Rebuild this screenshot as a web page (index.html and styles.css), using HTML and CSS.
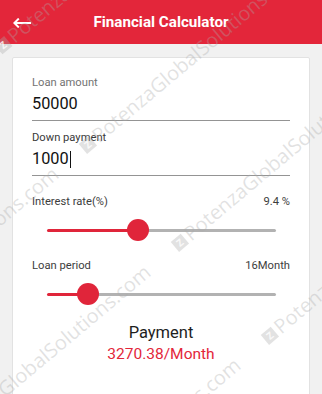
FILE: index.html
```html
<!DOCTYPE html>
<html>
<head>
<meta charset="utf-8">
<link rel="stylesheet" href="styles.css">
</head>
<body>
<div class="screen">
  <header class="appbar">
    <div class="back">
      <svg width="18" height="10" viewBox="0 0 18 10"><path d="M1 5H18M5.8 0.6L1.4 5L5.8 9.4" fill="none" stroke="#fff" stroke-width="2"/></svg>
    </div>
    <h1 class="title">Financial Calculator</h1>
    <div class="spacer"></div>
  </header>

  <main class="card">
    <div class="field">
      <div class="field-label">Loan amount</div>
      <div class="field-value">50000</div>
    </div>
    <div class="field field-focus">
      <div class="field-label">Down payment</div>
      <div class="field-value">1000<span class="caret"></span></div>
    </div>

    <div class="row row-first">
      <span>Interest rate(%)</span>
      <span>9.4 %</span>
    </div>
    <div class="slider">
      <div class="track">
        <div class="fill" style="width:39.7%"></div>
        <div class="rest"></div>
      </div>
      <div class="thumb" style="left:39.7%"></div>
    </div>

    <div class="row">
      <span>Loan period</span>
      <span>16Month</span>
    </div>
    <div class="slider">
      <div class="track">
        <div class="fill" style="width:17.9%"></div>
        <div class="rest"></div>
      </div>
      <div class="thumb" style="left:17.9%"></div>
    </div>

    <div class="result">
      <div class="result-title">Payment</div>
      <div class="result-value">3270.38/Month</div>
    </div>
  </main>

  <div class="watermarks" aria-hidden="true">
    <div class="wm wm-a"><span class="rep"><i class="logo">Z</i>PotenzaGlobalSolutions.com</span></div>
    <div class="wm wm-b"><span class="rep"><i class="logo">Z</i>PotenzaGlobalSolutions.com</span><span class="rep"><i class="logo">Z</i>PotenzaGlobalSolutions.com</span></div>
    <div class="wm wm-c"><span class="rep"><i class="logo">Z</i>PotenzaGlobalSolutions.com</span><span class="rep"><i class="logo">Z</i>PotenzaGlobalSolutions.com</span></div>
    <div class="wm wm-d"><span class="rep"><i class="logo">Z</i>PotenzaGlobalSolutions.com</span><span class="rep"><i class="logo">Z</i>PotenzaGlobalSolutions.com</span></div>
  </div>
</div>
</body>
</html>
```

FILE: styles.css
```css
* { box-sizing: border-box; }
html, body {
  margin: 0;
  padding: 0;
}
body {
  width: 322px;
  height: 394px;
  overflow: hidden;
  background: #f1f1f1;
  font-family: Roboto, "Noto Sans", sans-serif;
}
.screen {
  position: relative;
  width: 322px;
  height: 394px;
  overflow: hidden;
}
.appbar {
  height: 44px;
  background: #e3263a;
  display: grid;
  grid-template-columns: 44px 1fr 44px;
  align-items: center;
}
.back {
  padding-left: 13px;
  display: flex;
  align-items: center;
  height: 44px;
  padding-top: 2px;
}
.title {
  margin: 0;
  text-align: center;
  color: #fff;
  font-size: 15.2px;
  font-weight: 700;
  letter-spacing: 0;
}
.card {
  margin: 13px 12px 0 12px;
  height: 420px;
  background: #fff;
  border: 1px solid #e2e2e2;
  border-radius: 2px;
  padding: 17px 19px 0 19px;
}
.field {
  border-bottom: 1px solid #949494;
  padding-bottom: 5px;
}
.field + .field {
  margin-top: 9px;
}
.field-label {
  font-size: 11.2px;
  line-height: 16px;
  color: #737373;
}
.field-focus .field-label {
  color: #3a3a3a;
}
.field-value {
  margin-top: 2px;
  font-size: 16.3px;
  line-height: 22px;
  color: #111;
  display: flex;
  align-items: center;
}
.caret {
  display: inline-block;
  width: 1.5px;
  height: 17px;
  background: #111;
  margin-left: 1px;
}
.row {
  display: flex;
  justify-content: space-between;
  font-size: 11.2px;
  line-height: 16px;
  color: #3d3d3d;
  margin-top: 13px;
}
.row-first {
  margin-top: 18px;
}
.slider {
  position: relative;
  height: 30px;
  margin: 5px 14px 0 15px;
  display: flex;
  align-items: center;
}
.track {
  width: 100%;
  height: 3px;
  display: flex;
}
.fill {
  height: 3px;
  background: #e0253a;
  border-radius: 2px 0 0 2px;
}
.rest {
  flex: 1;
  height: 3px;
  background: #b2b2b2;
  border-radius: 0 2px 2px 0;
}
.thumb {
  position: absolute;
  top: 4px;
  width: 22px;
  height: 22px;
  margin-left: -11px;
  border-radius: 50%;
  background: #e0253a;
}
.result {
  margin-top: 12px;
  text-align: center;
}
.result-title {
  font-size: 16.5px;
  line-height: 24px;
  color: #1e1e1e;
}
.result-value {
  margin-top: -1px;
  font-size: 15.5px;
  line-height: 20px;
  color: #e3263a;
}

/* watermark overlay */
.watermarks {
  position: absolute;
  inset: 0;
  pointer-events: none;
}
.wm {
  position: absolute;
  white-space: nowrap;
  height: 24px;
  line-height: 24px;
  transform-origin: 0 50%;
  transform: rotate(-40deg);
  font-family: "Open Sans", Roboto, sans-serif;
  font-size: 20px;
  color: rgba(170, 170, 170, 0.34);
  display: flex;
}
.rep {
  display: inline-flex;
  align-items: center;
  width: 318px;
  flex: none;
}
.logo {
  display: inline-block;
  width: 13px;
  height: 13px;
  margin-right: 3px;
  background: rgba(170, 170, 170, 0.34);
  color: rgba(255, 255, 255, 0.8);
  font-style: normal;
  font-size: 10px;
  line-height: 13px;
  text-align: center;
  font-weight: 700;
}
.wm-a { left: -2px; top: 37px; }
.wm-b { left: -161px; top: 341px; }
.wm-c { left: -69px; top: 439px; }
.wm-d { left: 21px; top: 532px; }
```
